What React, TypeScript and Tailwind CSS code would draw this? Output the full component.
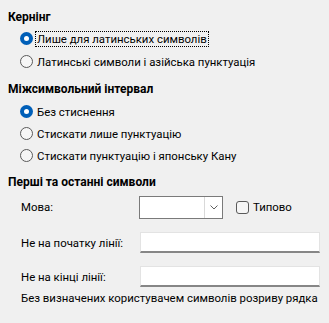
import React from 'react';

const font = { fontFamily: 'Roboto, "Noto Sans", sans-serif' };

function Radio({ checked, label, focused }: { checked?: boolean; label: string; focused?: boolean }) {
  return (
    <div className="flex h-[23px] items-center pl-3">
      {checked ? (
        <span className="flex h-[13px] w-[13px] items-center justify-center rounded-full bg-[#005fb8]">
          <span className="h-[5px] w-[5px] rounded-full bg-white" />
        </span>
      ) : (
        <span className="h-[13px] w-[13px] rounded-full border border-[#5a5a5a] bg-[#f6f6f6]" />
      )}
      <span
        className={
          'ml-[3px] px-px leading-[14px] ' +
          (focused ? 'outline outline-1 outline-dotted outline-black' : '')
        }
      >
        {label}
      </span>
    </div>
  );
}

function Field() {
  return <div className="h-[21px] w-[180px] border border-[#e3e3e3] border-b-2 border-b-[#868686] bg-white" />;
}

export default function App() {
  return (
    <div className="h-[323px] w-[329px] whitespace-nowrap bg-[#f0f0f0] pl-2 pt-[9px] text-[11.4px] text-black" style={font}>
      <div className="h-4 text-[12px] font-bold leading-4">Кернінг</div>
      <div className="mt-[2px]">
        <Radio checked focused label="Лише для латинських символів" />
        <Radio label="Латинські символи і азійська пунктуація" />
      </div>

      <div className="mt-2 h-4 text-[12px] font-bold leading-4">Міжсимвольний інтервал</div>
      <div className="mt-[3px] flex flex-col">
        <div className="h-[22px]">
          <Radio checked label="Без стиснення" />
        </div>
        <div className="h-[22px]">
          <Radio label="Стискати лише пунктуацію" />
        </div>
        <div className="h-[22px]">
          <Radio label="Стискати пунктуацію і японську Кану" />
        </div>
      </div>

      <div className="mt-2 h-4 text-[12px] font-bold leading-4">Перші та останні символи</div>

      <div className="mt-[6px] flex h-[23px] items-center pl-[13px]">
        <span className="w-[118px]">Мова:</span>
        <div className="flex h-[23px] w-[84px] border border-[#7a7a7a] bg-white">
          <div className="flex-1" />
          <div className="flex w-[18px] items-center justify-center border-l border-[#d9d9d9]">
            <svg width="8" height="5" viewBox="0 0 8 5" fill="none">
              <path d="M0.5 0.5 L4 4 L7.5 0.5" stroke="#606060" strokeWidth="1" />
            </svg>
          </div>
        </div>
        <span className="ml-[13px] h-[13px] w-[13px] rounded-[3px] border border-[#5a5a5a] bg-[#f6f6f6]" />
        <span className="ml-[4px]">Типово</span>
      </div>

      <div className="mt-[13px] flex h-[21px] items-center pl-[13px]">
        <span className="w-[119px] pt-[2px]">Не на початку лінії:</span>
        <Field />
      </div>
      <div className="mt-[13px] flex h-[21px] items-center pl-[13px]">
        <span className="w-[119px] pt-[2px]">Не на кінці лінії:</span>
        <Field />
      </div>

      <div className="mt-[3px] h-4 pl-[13px] leading-4">Без визначених користувачем символів розриву рядка</div>
    </div>
  );
}
